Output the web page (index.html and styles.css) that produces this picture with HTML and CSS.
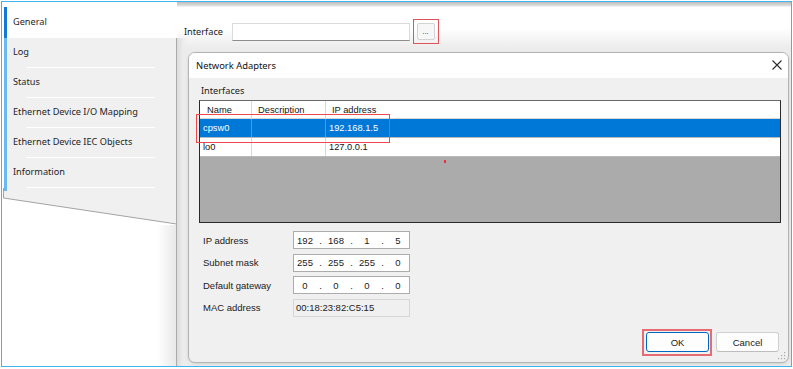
FILE: index.html
```html
<!DOCTYPE html>
<html>
<head>
<meta charset="utf-8">
<link rel="stylesheet" href="styles.css">
</head>
<body>
<div class="frame">
  <div class="tabs">
    <div class="tab active">General</div>
    <div class="tab">Log</div>
    <div class="tab">Status</div>
    <div class="tab">Ethernet Device I/O Mapping</div>
    <div class="tab">Ethernet Device IEC Objects</div>
    <div class="tab">Information</div>
    <svg class="tab-end" width="175" height="37" viewBox="0 0 175 37">
      <polygon points="1.5,0 174.5,0 174.5,36 1.5,10" fill="#f0f0f0"/>
      <rect x="2" y="0" width="3" height="3" fill="#6bb9f3"/>
      <polyline points="1.5,0 1.5,10 174.5,36" fill="none" stroke="#a3a3a3" stroke-width="1"/>
      <line x1="174.5" y1="0" x2="174.5" y2="37" stroke="#a9a9a9" stroke-width="1"/>
    </svg>
    <div class="tab-rest"></div>
  </div>
  <div class="content">
    <div class="iface-row">
      <span class="iface-label">Interface</span>
      <div class="iface-input"></div>
      <div class="mark-box"><button class="browse">...</button></div>
    </div>
    <div class="dialog">
      <div class="dlg-title">
        <span class="dlg-title-text">Network Adapters</span>
        <svg class="dlg-close" width="10" height="10" viewBox="0 0 10 10">
          <path d="M0.5 0.5 L9.5 9.5 M9.5 0.5 L0.5 9.5" stroke="#2b2b2b" stroke-width="1.1" fill="none"/>
        </svg>
      </div>
      <div class="dlg-body">
        <div class="grp-label">Interfaces</div>
        <div class="list">
          <div class="lrow lhead">
            <div class="c1 h">Name</div>
            <div class="c2 h">Description</div>
            <div class="c3 h">IP address</div>
          </div>
          <div class="lrow sel">
            <div class="c1">cpsw0</div>
            <div class="c2"></div>
            <div class="c3">192.168.1.5</div>
          </div>
          <div class="lrow">
            <div class="c1">lo0</div>
            <div class="c2"></div>
            <div class="c3">127.0.0.1</div>
          </div>
          <div class="lempty"></div>
        </div>
        <div class="fields">
          <span class="flabel">IP address</span>
          <div class="ipbox"><span class="seg">192</span><span class="dot">.</span><span class="seg">168</span><span class="dot">.</span><span class="seg">1</span><span class="dot">.</span><span class="seg">5</span></div>
          <span class="flabel">Subnet mask</span>
          <div class="ipbox"><span class="seg">255</span><span class="dot">.</span><span class="seg">255</span><span class="dot">.</span><span class="seg">255</span><span class="dot">.</span><span class="seg">0</span></div>
          <span class="flabel">Default gateway</span>
          <div class="ipbox"><span class="seg">0</span><span class="dot">.</span><span class="seg">0</span><span class="dot">.</span><span class="seg">0</span><span class="dot">.</span><span class="seg">0</span></div>
          <span class="flabel">MAC address</span>
          <div class="macbox">00:18:23:82:C5:15</div>
        </div>
        <div class="buttons">
          <button class="btn btn-default">OK</button>
          <button class="btn">Cancel</button>
        </div>
      </div>
      <div class="mark-row"></div>
      <div class="mark-ok"></div>
      <div class="mark-dot"></div>
      <svg class="grip" width="8" height="8" viewBox="0 0 8 8">
        <rect x="6" y="0" width="1.2" height="1.2" fill="#a8a8a8"/>
        <rect x="3" y="3" width="1.2" height="1.2" fill="#a8a8a8"/>
        <rect x="6" y="3" width="1.2" height="1.2" fill="#a8a8a8"/>
        <rect x="0" y="6" width="1.2" height="1.2" fill="#a8a8a8"/>
        <rect x="3" y="6" width="1.2" height="1.2" fill="#a8a8a8"/>
        <rect x="6" y="6" width="1.2" height="1.2" fill="#a8a8a8"/>
      </svg>
    </div>
  </div>
</div>
</body>
</html>
```

FILE: styles.css
```css
* { box-sizing: border-box; }

html, body {
  margin: 0;
  padding: 0;
  background: #ffffff;
}

body {
  width: 793px;
  height: 369px;
  overflow: hidden;
  font-family: "Noto Sans", "Open Sans", sans-serif;
  color: #1a1a1a;
}

.frame {
  margin: 1px 0 0 1px;
  width: 791px;
  height: 366px;
  border: 1px solid #3fb4ee;
  display: flex;
  background: #ffffff;
}

/* ---------- left tab strip ---------- */
.tabs {
  width: 175px;
  flex: none;
  display: flex;
  flex-direction: column;
  padding-top: 5px;
  background: #ffffff;
}

.tab {
  margin-left: 2px;
  height: 30px;
  display: flex;
  align-items: center;
  padding: 0 0 3px 6px;
  border-left: 3px solid #6bb9f3;
  border-right: 1px solid #a9a9a9;
  font-size: 9.2px;
  color: #1e1e1e;
  white-space: nowrap;
  background:
    linear-gradient(#ffffff, #ffffff) no-repeat 19px 100% / 129px 1px,
    #f0f0f0;
}

.tab.active {
  height: 31px;
  border-left-color: #1479d6;
  border-right: none;
  background: #ffffff;
}

.tab-end {
  display: block;
  flex: none;
}

.tab-rest {
  flex: 1;
  border-right: 1px solid #a9a9a9;
  background: linear-gradient(to right, #ffffff 0, #ffffff 155px, #e9e9e9 174px);
}

/* ---------- main content ---------- */
.content {
  flex: 1;
  display: flex;
  flex-direction: column;
  background:
    linear-gradient(to right, #dcdcdc 0, #ececec 6px, rgba(236,236,236,0) 11px) no-repeat 0 36px / 12px 100%,
    linear-gradient(to bottom, #bcbcbc 0, #e2e2e2 4px, #ffffff 5px, #ffffff 26px, #ececec 46px, #ececec 100%);
}

.iface-row {
  margin-top: 17px;
  padding-left: 7px;
  display: flex;
  align-items: center;
  height: 25px;
}

.iface-label {
  width: 48px;
  font-size: 9.2px;
  color: #1a1a1a;
}

.iface-input {
  width: 178px;
  height: 18px;
  background: #ffffff;
  border: 1px solid #dadada;
  border-bottom-color: #8d8d8d;
}

.mark-box {
  margin-left: 3px;
  width: 26px;
  height: 25px;
  border: 1px solid #e0535b;
  display: flex;
  align-items: center;
  justify-content: center;
}

.browse {
  width: 18px;
  height: 17px;
  padding: 0;
  margin: 0 1px 0 0;
  border: 1px solid #d3d3d3;
  border-radius: 2px;
  background: #f7f7f7;
  font-family: "Liberation Sans", Arial, sans-serif;
  font-size: 8px;
  line-height: 12px;
  color: #333;
}

/* ---------- dialog ---------- */
.dialog {
  position: relative;
  margin: 8px 0 0 11px;
  width: 601px;
  height: 311px;
  border: 1px solid #b4b4b4;
  border-radius: 7px;
  background: #f0f0f0;
  display: flex;
  flex-direction: column;
  box-shadow: 0 1px 3px rgba(0,0,0,0.12);
}

.dlg-title {
  height: 25px;
  flex: none;
  display: flex;
  align-items: center;
  justify-content: space-between;
  padding: 0 6px 1px 7px;
  background: #ffffff;
  border-radius: 6px 6px 0 0;
}

.dlg-title-text {
  font-size: 9.4px;
  color: #111;
}

.dlg-close {
  display: block;
}

.dlg-body {
  flex: 1;
  display: flex;
  flex-direction: column;
  padding: 0 7px 10px 10px;
}

.grp-label {
  margin: 6px 0 0 2px;
  height: 13px;
  line-height: 13px;
  font-size: 9.2px;
  color: #1a1a1a;
}

.list {
  margin-top: 3px;
  width: 582px;
  height: 123px;
  border: 1px solid #2a2a2a;
  border-top-color: #6a6a6a;
  background: #ababab;
  display: flex;
  flex-direction: column;
  font-family: "Liberation Sans", Arial, sans-serif;
  font-size: 9.3px;
}

.lrow {
  height: 19px;
  flex: none;
  display: flex;
  background: #ffffff;
  border-bottom: 1px solid #b8b8b8;
  color: #141414;
}

.lrow.lhead {
  height: 18px;
  border-bottom-color: #d6d6d6;
}

.lrow.sel {
  background: #0078d7;
  color: #ffffff;
}

.c1, .c2, .c3 {
  display: flex;
  align-items: center;
  padding-left: 3px;
  white-space: nowrap;
}

.c1 { width: 52px; border-right: 1px solid #d8d8d8; }
.c2 { width: 74px; border-right: 1px solid #d8d8d8; }
.c3 { flex: 1; }

.lrow.sel .c1, .lrow.sel .c2 { border-right-color: #4b9be0; }

.c1.h { padding-left: 7px; }
.c2.h, .c3.h { padding-left: 6px; }

.lempty { flex: 1; }

.fields {
  margin: 8px 0 0 4px;
  display: grid;
  grid-template-columns: 90px 117px;
  grid-auto-rows: 18px;
  row-gap: 4.5px;
  align-items: center;
  font-family: "Liberation Sans", Arial, sans-serif;
  font-size: 9.5px;
  color: #1a1a1a;
}

.ipbox {
  height: 18px;
  display: flex;
  align-items: center;
  background: #ffffff;
  border: 1px solid #acacac;
}

.seg {
  width: 22px;
  text-align: center;
}

.dot {
  width: 9px;
  text-align: center;
}

.macbox {
  height: 18px;
  display: flex;
  align-items: center;
  padding-left: 2px;
  background: #f0f0f0;
  border: 1px solid #d7d7d7;
}

.buttons {
  margin-top: auto;
  display: flex;
  justify-content: flex-end;
  gap: 7px;
  padding-right: 2px;
}

.btn {
  width: 63px;
  height: 20px;
  padding: 0;
  margin: 0;
  border: 1px solid #d0d0d0;
  border-bottom-color: #bdbdbd;
  border-radius: 3px;
  background: #fdfdfd;
  font-family: "Liberation Sans", Arial, sans-serif;
  font-size: 9.5px;
  color: #1a1a1a;
}

.btn-default {
  border: 1px solid #0067c0;
}

/* ---------- annotation overlays ---------- */
.mark-row {
  position: absolute;
  left: 7px;
  top: 61px;
  width: 194px;
  height: 29px;
  border: 1px solid #f0474f;
}

.mark-ok {
  position: absolute;
  left: 453px;
  top: 276px;
  width: 70px;
  height: 27px;
  border: 2px solid #e66b73;
}

.mark-dot {
  position: absolute;
  left: 255px;
  top: 107px;
  width: 2px;
  height: 3px;
  background: #e8333d;
}

.grip {
  position: absolute;
  right: 2px;
  bottom: 2px;
}
```
